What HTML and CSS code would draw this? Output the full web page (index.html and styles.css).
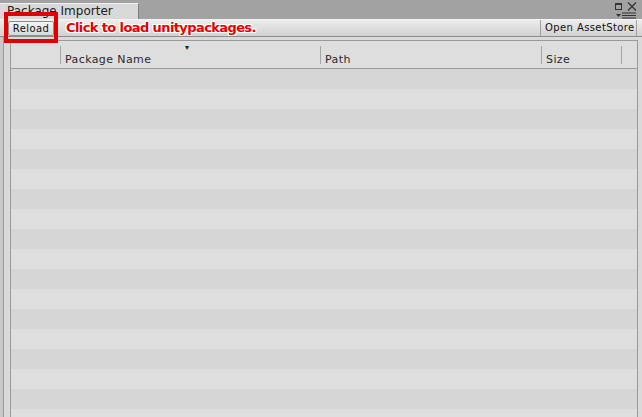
FILE: index.html
```html
<!DOCTYPE html>
<html>
<head>
<meta charset="utf-8">
<link rel="stylesheet" href="styles.css">
</head>
<body>
<div class="window">
  <div class="titlebar">
    <div class="tab">Package Importer</div>
    <div class="winctrls">
      <div class="ctrlrow">
        <svg class="maxicon" width="7" height="7" viewBox="0 0 7 7"><rect x="0.5" y="0.5" width="6" height="6" fill="none" stroke="#333" stroke-width="1"/><rect x="0" y="0" width="7" height="2" fill="#333"/></svg>
        <svg class="closeicon" width="10" height="9" viewBox="0 0 10 9"><path d="M1 0.5L9 8.5M9 0.5L1 8.5" stroke="#333" stroke-width="1.2"/></svg>
      </div>
      <svg class="menuicon" width="20" height="7" viewBox="0 0 20 7"><path d="M0 2h5l-2.5 3z" fill="#333"/><path d="M6 1h14M6 3.5h14M6 6h14" stroke="#333" stroke-width="1"/></svg>
    </div>
  </div>
  <div class="toolbar">
    <div class="btn reload">Reload</div>
    <div class="hint">Click to load unitypackages.</div>
    <div class="btn store">Open AssetStore</div>
  </div>
  <div class="content">
    <div class="table">
      <div class="thead">
        <div class="th c0"></div>
        <div class="th c1"><span class="sort">▾</span><span class="lbl">Package Name</span></div>
        <div class="th c2"><span class="lbl">Path</span></div>
        <div class="th c3"><span class="lbl">Size</span></div>
        <div class="th c4"></div>
      </div>
      <div class="tbody">
        <div class="row"></div><div class="row"></div><div class="row"></div><div class="row"></div>
        <div class="row"></div><div class="row"></div><div class="row"></div><div class="row"></div>
        <div class="row"></div><div class="row"></div><div class="row"></div><div class="row"></div>
        <div class="row"></div><div class="row"></div><div class="row"></div><div class="row"></div>
        <div class="row"></div><div class="row"></div>
      </div>
    </div>
  </div>
  <div class="redbox"></div>
</div>
</body>
</html>
```
FILE: styles.css
```css
* { box-sizing: border-box; }
html, body { margin: 0; padding: 0; }
body {
  width: 642px;
  height: 417px;
  overflow: hidden;
  background: #a2a2a2;
  font-family: "DejaVu Sans", "Liberation Sans", sans-serif;
  font-size: 11px;
  color: #1a1a1a;
}
.window {
  position: relative;
  width: 642px;
  height: 417px;
  display: flex;
  flex-direction: column;
}
.titlebar {
  height: 19px;
  display: flex;
  align-items: flex-end;
  background: #a2a2a2;
  flex-shrink: 0;
}
.tab {
  width: 139px;
  height: 16px;
  background: #d9d9d9;
  border-top: 1px solid #f0f0f0;
  border-right: 1px solid #7d7d7d;
  padding-left: 7px;
  line-height: 15px;
  font-size: 12px;
  color: #202020;
  white-space: nowrap;
  overflow: hidden;
}
.winctrls {
  margin-left: auto;
  height: 19px;
  width: 36px;
  display: flex;
  flex-direction: column;
  align-items: flex-end;
  padding-right: 5px;
  padding-top: 1px;
  flex-shrink: 0;
}
.ctrlrow {
  display: flex;
  align-items: center;
  gap: 5px;
  height: 10px;
}
.menuicon { margin-top: 1px; margin-right: 1px; }
.toolbar {
  height: 18px;
  flex-shrink: 0;
  display: flex;
  align-items: stretch;
  background: linear-gradient(#ececec, #d2d2d2);
  border-top: 1px solid #f4f4f4;
  border-bottom: 1px solid #8c8c8c;
}
.btn {
  font-size: 10px;
  letter-spacing: 0.4px;
  white-space: nowrap;
  color: #111;
}
.reload {
  margin: 1px 0 1px 8px;
  width: 46px;
  height: 15px;
  line-height: 13px;
  text-align: center;
  border: 1px solid #8e8e8e;
  border-radius: 2px;
  background: linear-gradient(#f4f4f4, #d8d8d8);
}
.hint {
  margin-left: 12px;
  font-weight: bold;
  font-size: 13px;
  letter-spacing: -0.6px;
  line-height: 16px;
  color: #e60000;
  text-shadow: -1px 0 #fff, 1px 0 #fff, 0 -1px #fff, 0 1px #fff, 1px 1px #fff, -1px -1px #fff, 1px -1px #fff, -1px 1px #fff;
}
.store {
  margin-left: auto;
  margin-right: 5px;
  width: 97px;
  padding-left: 4px;
  line-height: 16px;
  border-left: 1px solid #a0a0a0;
  border-right: 1px solid #a0a0a0;
}
.content {
  flex: 1;
  background: #dadada;
  padding: 3px 4px 0 10px;
  border-left: 3px solid #c9c9c9;
  position: relative;
}
.content::before {
  content: "";
  position: absolute;
  left: 0;
  top: 0;
  bottom: 0;
  width: 1px;
  background: #9a9a9a;
}
.table {
  height: 100%;
  margin-left: -3px;
  width: 628px;
  border: 1px solid #9a9a9a;
  border-bottom: none;
  display: flex;
  flex-direction: column;
  background: #dedede;
}
.thead {
  height: 28px;
  display: flex;
  border-bottom: 1px solid #9a9a9a;
  background: #dedede;
  flex-shrink: 0;
}
.th {
  position: relative;
  height: 100%;
  border-right: 1px solid transparent;
}
.th::after {
  content: "";
  position: absolute;
  right: -1px;
  top: 5px;
  height: 18px;
  width: 1px;
  background: #a5a5a5;
}
.c4::after { display: none; }
.c0 { width: 50px; }
.c1 { width: 260px; }
.c2 { width: 221px; }
.c3 { width: 80px; }
.c4 { flex: 1; }
.lbl {
  position: absolute;
  left: 4px;
  top: 12px;
  font-size: 11px;
  letter-spacing: 0.4px;
  color: #2a2a2a;
  white-space: nowrap;
}
.sort {
  position: absolute;
  left: 124px;
  top: 2px;
  font-size: 8px;
  color: #222;
}
.tbody {
  flex: 1;
  overflow: hidden;
}
.row {
  height: 20px;
  background: #d6d6d6;
}
.row:nth-child(even) { background: #dedede; }
.redbox {
  position: absolute;
  left: 4px;
  top: 12px;
  width: 54px;
  height: 31px;
  border: 4px solid #e00000;
}
```
